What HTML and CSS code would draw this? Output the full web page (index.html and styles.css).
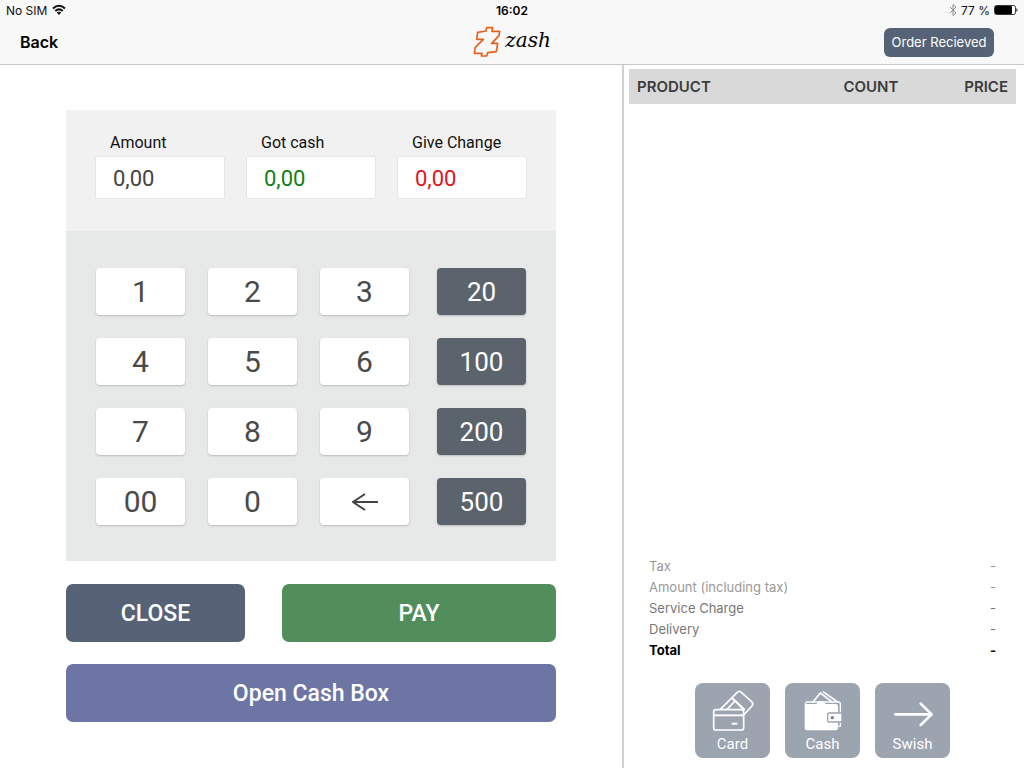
FILE: index.html
```html
<!DOCTYPE html>
<html lang="en">
    <head>
        <meta charset="utf-8">
        <meta name="viewport" content="width=device-width, initial-scale=1">
        <title>Zash - Cash payment</title>
        <link rel="stylesheet" href="styles.css">
    </head>
    <body>
        <header>
            <div class="status">
                <div class="status-left">
                    <span>No SIM</span>
                    <svg width="14" height="12" viewBox="0 0 14 12" fill="none" stroke="#111" stroke-width="2">
                        <path d="M1 4.5Q7 -1 13 4.5M3.3 7Q7 3.7 10.7 7"/>
                        <path d="M7 11L4.8 8.6Q7 7 9.2 8.6Z" fill="#111" stroke="none"/>
                    </svg>
                </div>
                <div class="clock">16:02</div>
                <div class="status-right">
                    <svg width="8" height="12" viewBox="0 0 8 12" fill="none" stroke="#8e8e8e" stroke-width="1">
                        <path d="M1 3L7 9L4 11.5V.5L7 3L1 9"/>
                    </svg>
                    <span>77 %</span>
                    <svg width="24" height="10" viewBox="0 0 24 10">
                        <rect x=".5" y=".5" width="21" height="9" rx="2" fill="#fff" stroke="#333"/>
                        <rect x="1" y="1" width="17" height="8" rx="1" fill="#000"/>
                        <path d="M22.5 3Q24.5 5 22.5 7Z" fill="#000"/>
                    </svg>
                </div>
            </div>
            <nav>
                <a class="back" href="#">Back</a>
                <div class="logo">
                    <svg width="28" height="32" viewBox="41 79 84 96" fill="none" stroke="#e2611f" stroke-width="5" stroke-linejoin="round">
                        <path d="M55 98L80 94L82 84H100L98 95H121L119 108L97 131H115L111 156L85 159L82 169H66L68 161H45L48 143L72 119H52Z"/>
                    </svg>
                    <span>zash</span>
                </div>
                <button class="order" type="button">Order Recieved</button>
            </nav>
        </header>
        <main>
            <section class="register">
                <div class="display">
                    <div class="field">
                        <label for="amount">Amount</label>
                        <input id="amount" type="text" value="0,00">
                    </div>
                    <div class="field">
                        <label for="cash">Got cash</label>
                        <input id="cash" class="green" type="text" value="0,00">
                    </div>
                    <div class="field">
                        <label for="change">Give Change</label>
                        <input id="change" class="red" type="text" value="0,00">
                    </div>
                </div>
                <div class="keypad">
                    <div class="keys">
                        <button type="button">1</button>
                        <button type="button">2</button>
                        <button type="button">3</button>
                        <button type="button">4</button>
                        <button type="button">5</button>
                        <button type="button">6</button>
                        <button type="button">7</button>
                        <button type="button">8</button>
                        <button type="button">9</button>
                        <button type="button">00</button>
                        <button type="button">0</button>
                        <button type="button" aria-label="Delete">
                            <svg width="26" height="18" viewBox="0 0 26 18" fill="none" stroke="#444" stroke-width="2">
                                <path d="M26 9H1M13 1L1 9L13 17"/>
                            </svg>
                        </button>
                    </div>
                    <div class="notes">
                        <button type="button">20</button>
                        <button type="button">100</button>
                        <button type="button">200</button>
                        <button type="button">500</button>
                    </div>
                </div>
                <div class="actions">
                    <button class="close" type="button">CLOSE</button>
                    <button class="pay" type="button">PAY</button>
                    <button class="cashbox" type="button">Open Cash Box</button>
                </div>
            </section>
            <section class="receipt">
                <table class="products">
                    <thead>
                        <tr>
                            <th>PRODUCT</th>
                            <th class="count">COUNT</th>
                            <th class="price">PRICE</th>
                        </tr>
                    </thead>
                </table>
                <table class="totals">
                    <tr class="light"><th>Tax</th><td>-</td></tr>
                    <tr class="light"><th>Amount (including tax)</th><td>-</td></tr>
                    <tr><th>Service Charge</th><td>-</td></tr>
                    <tr><th>Delivery</th><td>-</td></tr>
                    <tr class="total"><th>Total</th><td>-</td></tr>
                </table>
                <div class="methods">
                    <button type="button">
                        <svg width="44" height="44" viewBox="76 40 132 132" fill="none" stroke="#fff" stroke-width="5" stroke-linejoin="round">
                            <path d="M104 104L154 54Q160 47 167 53L198 81Q204 87 199 94L174 121"/>
                            <path d="M124 104L148 79"/>
                            <path d="M139 70L177 106" stroke-width="7"/>
                            <rect x="84" y="105" width="90" height="61" rx="6"/>
                            <path d="M84 122H174" stroke-width="6"/>
                            <path d="M138 147H155" stroke-width="6"/>
                        </svg>
                        <span>Card</span>
                    </button>
                    <button type="button">
                        <svg width="44" height="44" viewBox="76 40 132 132" fill="none" stroke="#fff" stroke-width="5" stroke-linejoin="round">
                            <path d="M110 84L134 55L172 84M142 51L186 82"/>
                            <path d="M122 88Q136 70 150 88Z" fill="#fff" stroke="none"/>
                            <path d="M90 82H188Q194 82 194 88V155H187" stroke-width="4"/>
                            <path d="M87 82Q89 88 96 88H180Q187 88 187 95V160Q187 167 180 167H94Q87 167 87 160Z" fill="#fff" stroke="none"/>
                            <path d="M199 115H160Q156 115 156 119V138Q156 142 160 142H199Z" fill="#fff" stroke="#9ca4b0" stroke-width="4"/>
                            <circle cx="170" cy="129" r="5" fill="#777f8c" stroke="none"/>
                        </svg>
                        <span>Cash</span>
                    </button>
                    <button type="button">
                        <svg width="44" height="44" viewBox="346 40 132 132" fill="none" stroke="#fff" stroke-width="8" stroke-linecap="round" stroke-linejoin="round">
                            <path d="M359 119H467M435 87L468 119L435 151"/>
                        </svg>
                        <span>Swish</span>
                    </button>
                </div>
            </section>
        </main>
    </body>
</html>
```
FILE: styles.css
```css
* {
    box-sizing: border-box;
}
body {
    display: flex;
    flex-direction: column;
    min-height: 100vh;
    margin: 0;
    background: #fff;
    font-family: Inter, "Liberation Sans", sans-serif;
}
button, input {
    font-family: Roboto, sans-serif;
    margin: 0;
    padding: 0;
    border: none;
}
button {
    cursor: pointer;
}

/* top bar */
header {
    background: #f8f8f8;
    border-bottom: 1px solid #c8c8c8;
}
.status, nav {
    display: grid;
    grid-template-columns: 1fr auto 1fr;
    align-items: center;
}
.status {
    height: 20px;
    padding: 0 6px;
    font-size: 12px;
    color: #111;
}
.status-left, .status-right {
    display: flex;
    align-items: center;
    gap: 5px;
}
.status-right {
    justify-content: flex-end;
    gap: 4px;
}
.clock {
    font-weight: 600;
    color: #000;
}
nav {
    height: 44px;
    padding: 0 20px;
}
.back {
    color: #000;
    font-size: 16px;
    font-weight: 600;
    text-decoration: none;
}
.logo {
    display: flex;
    align-items: center;
    gap: 4px;
    font-family: "DejaVu Serif", serif;
    font-size: 20px;
    font-style: italic;
    line-height: 24px;
}
.logo span {
    padding-bottom: 4px;
}
.order {
    justify-self: end;
    width: 110px;
    height: 29px;
    margin-right: 10px;
    border-radius: 6px;
    background: #566376;
    color: #fff;
    font-family: Inter, sans-serif;
    font-size: 13px;
}

main {
    display: grid;
    grid-template-columns: 39fr 25fr;
    flex: 1;
}

/* cash register */
.register {
    padding: 45px 66px 46px;
    border-right: 2px solid #d0d0d0;
}
.display {
    display: grid;
    grid-template-columns: repeat(3, 1fr);
    gap: 21px;
    height: 121px;
    padding: 22px 29px 0;
    background: #f1f1f1;
}
.field label {
    display: block;
    margin-bottom: 2px;
    padding-left: 15px;
    font-family: Roboto, sans-serif;
    font-size: 16px;
    line-height: 22px;
    color: #111;
}
.field input {
    width: 100%;
    height: 43px;
    padding: 2px 0 0 17px;
    border: 1px solid #e6e6e6;
    border-radius: 2px;
    background: #fff;
    font-size: 22px;
    color: #444;
}
.field .green {
    color: #128012;
}
.field .red {
    color: #e3141e;
}
.keypad {
    display: grid;
    grid-template-columns: 313fr 89fr;
    gap: 28px;
    height: 330px;
    padding: 37px 30px 0;
    background: #e7e9e8;
}
.keys, .notes {
    display: grid;
    grid-auto-rows: 47px;
    gap: 23px;
}
.keys {
    grid-template-columns: repeat(3, 1fr);
}
.keypad button {
    display: flex;
    align-items: center;
    justify-content: center;
    border-radius: 4px;
    background: #fff;
    box-shadow: 0 1px 2px rgba(0, 0, 0, 0.2);
    color: #4a4a4a;
    font-size: 30px;
}
.keypad .notes button {
    background: #5b636d;
    color: #fff;
    font-size: 26px;
}
.actions {
    display: grid;
    grid-template-columns: 179fr 274fr;
    gap: 22px 37px;
    margin-top: 23px;
}
.actions button {
    height: 58px;
    border-radius: 7px;
    color: #fff;
    font-size: 23px;
    font-weight: 500;
}
.actions .close {
    background: #566376;
}
.actions .pay {
    background: #518e5c;
}
.actions .cashbox {
    grid-column: 1 / 3;
    background: #6c75a4;
}

/* order list */
.receipt {
    display: flex;
    flex-direction: column;
    padding: 4px 8px 10px 5px;
}
table {
    border-collapse: collapse;
}
.products {
    width: 100%;
    table-layout: fixed;
    background: #d9d9d9;
    color: #3c3c3c;
    font-size: 15px;
}
.products th {
    height: 35px;
    padding: 0 8px;
    font-weight: 600;
    text-align: left;
}
.products .count {
    width: 35%;
    text-align: center;
}
.products .price {
    width: 20%;
    text-align: right;
}
.totals {
    margin: auto 20px 22px;
    font-size: 13px;
    line-height: 21px;
    color: #777;
}
.totals th, .totals td {
    padding: 0;
    font-weight: 400;
    text-align: left;
}
.totals td {
    text-align: right;
}
.totals .light {
    color: #999;
}
.totals .total {
    color: #000;
}
.totals .total th, .totals .total td {
    font-weight: 700;
}
.methods {
    display: flex;
    justify-content: center;
    gap: 15px;
}
.methods button {
    display: flex;
    flex-direction: column;
    align-items: center;
    width: 75px;
    height: 75px;
    padding-top: 5px;
    border-radius: 8px;
    background: #9ca4b0;
    color: #fff;
    font-size: 15px;
    line-height: 24px;
}
```
